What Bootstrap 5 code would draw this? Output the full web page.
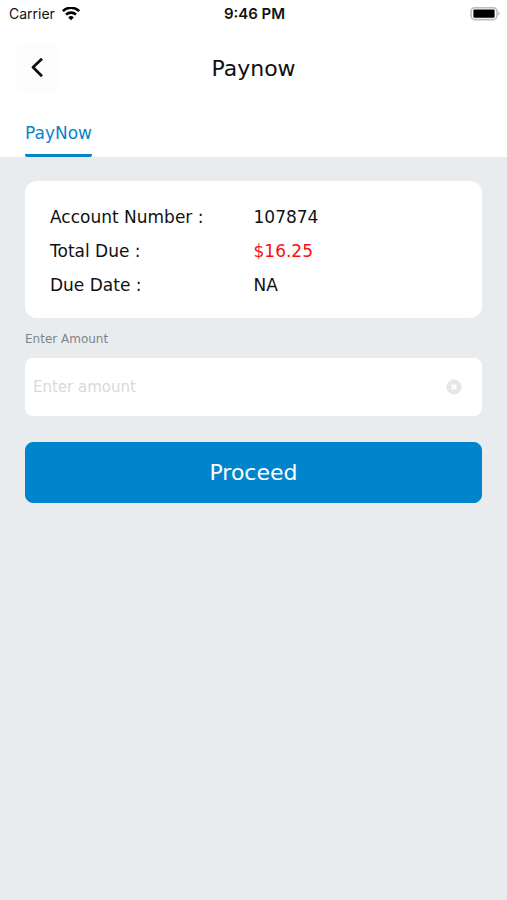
<!DOCTYPE html>
<html lang="en">
<head>
<meta charset="utf-8">
<meta name="viewport" content="width=device-width, initial-scale=1">
<title>Paynow</title>
<link href="https://cdn.jsdelivr.net/npm/bootstrap@5.3.0/dist/css/bootstrap.min.css" rel="stylesheet">
<style>
body { font-family: "DejaVu Sans", sans-serif; background: #e8ecef; color: #111; }
.status-bar { font: 14px/28px Inter, sans-serif; padding: 0 7px 0 9px; }
.status-bar > * { flex: 1 1 0; }
.status-bar .carrier { gap: 6px; }
.status-time { font-weight: 600; font-size: 15px; }
.title-bar { height: 80px; padding: 0 15px; }
.title-bar > * { flex: 0 0 45px; }
.back-btn { height: 50px; color: #111; background: #fdfdfd; border-radius: 8px; }
.title-bar h1 { flex: 1; font-size: 22px; line-height: 28px; font-weight: 400; padding-top: 2px; }
.tab-bar { padding: 0 25px; }
.tab-bar .nav-link { color: #0a84c8; font-size: 17px; line-height: 24px; padding: 13px 0 9px; border-bottom: 3px solid #0a84c8; border-radius: 2px; }
.page-main { padding: 24px 25px; }
.bill-card { border-radius: 12px; padding: 19px 25px 16px; font-size: 17px; line-height: 34px; }
.bill-card .row { --bs-gutter-x: 0; }
.due { color: #fa0f14; }
.amount-label { font-size: 12px; line-height: 20px; color: #808488; margin: 11px 0 9px; }
.amount-box { border-radius: 8px; height: 58px; padding: 0 20px 0 8px; }
.amount-box input { font-size: 15px; line-height: 22px; }
.amount-box input::placeholder { color: #d8d9dc; opacity: 1; }
.pay-btn { --bs-btn-bg: #0085cc; --bs-btn-border-color: #0085cc; height: 61px; margin-top: 26px; border-radius: 8px; font-size: 22px; line-height: 28px; }
</style>
</head>
<body>
<header class="bg-white">
  <div class="status-bar d-flex align-items-center">
    <div class="carrier d-flex align-items-center">
      <span>Carrier</span>
      <svg width="20" height="14" viewBox="0 0 20 14" fill="none" stroke="#000" stroke-width="2.6" aria-hidden="true"><path d="M1.8 4.1a11.8 11.8 0 0 1 16.4 0M5 7.6a7.2 7.2 0 0 1 10 0"/><path d="M10 13.2 7.2 10.4a4 4 0 0 1 5.6 0z" fill="#000" stroke="none"/></svg>
    </div>
    <div class="status-time text-center">9:46 PM</div>
    <div class="d-flex justify-content-end">
      <svg width="30" height="14" viewBox="0 0 30 14" aria-hidden="true"><rect x="1" y=".6" width="26" height="12" rx="4" fill="#fff" stroke="#bdbdbd" stroke-width="1.6"/><rect x="3.4" y="2.4" width="21.2" height="8.4" rx="1.2"/><path d="M28.2 4.4q3 2.2 0 4.4z" fill="#bdbdbd"/></svg>
    </div>
  </div>
  <div class="title-bar d-flex align-items-center">
    <button type="button" class="back-btn btn border-0 p-0 d-flex align-items-center justify-content-center" aria-label="Back">
      <svg width="16" height="22" viewBox="0 0 16 22" fill="none" stroke="currentColor" stroke-width="2.8" stroke-linejoin="round"><path d="M12 1.8 3 10.3l9 8.9"/></svg>
    </button>
    <h1 class="text-center mb-0">Paynow</h1>
    <span></span>
  </div>
  <nav class="tab-bar nav" aria-label="Payment">
    <a class="nav-link" href="#paynow" aria-current="page">PayNow</a>
  </nav>
</header>
<main class="page-main" id="paynow">
  <dl class="bill-card bg-white mb-0">
    <div class="row"><dt class="col-6 fw-normal">Account Number :</dt><dd class="col-6 mb-0">107874</dd></div>
    <div class="row"><dt class="col-6 fw-normal">Total Due :</dt><dd class="col-6 mb-0 due">$16.25</dd></div>
    <div class="row"><dt class="col-6 fw-normal">Due Date :</dt><dd class="col-6 mb-0">NA</dd></div>
  </dl>
  <form>
    <label class="amount-label d-block" for="amount">Enter Amount</label>
    <div class="amount-box bg-white d-flex align-items-center">
      <input class="form-control border-0 bg-transparent shadow-none p-0" id="amount" type="text" inputmode="decimal" placeholder="Enter amount">
      <button type="reset" class="btn border-0 p-0 d-flex" aria-label="Clear amount">
        <svg width="16" height="16" viewBox="0 0 16 16"><circle cx="8" cy="8" r="7.6" fill="#e6e7ea"/><path d="m6.2 6.2 3.6 3.6m0-3.6-3.6 3.6" stroke="#fff" stroke-width="2" stroke-linecap="round"/></svg>
      </button>
    </div>
    <button type="button" class="pay-btn btn btn-primary w-100">Proceed</button>
  </form>
</main>
<script src="https://cdn.jsdelivr.net/npm/bootstrap@5.3.0/dist/js/bootstrap.bundle.min.js"></script>
</body>
</html>
